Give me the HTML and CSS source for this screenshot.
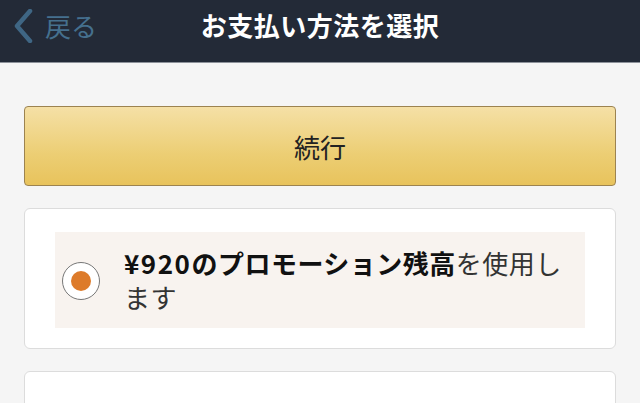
FILE: index.html
```html
<!DOCTYPE html>
<html lang="ja">
<head>
    <meta charset="UTF-8">
    <meta name="viewport" content="width=device-width, initial-scale=1.0">
    <title>お支払い方法を選択</title>
    <link rel="stylesheet" href="styles.css">
</head>
<body>

<div class="header">
    <a class="back" href="#">
        <svg class="chevron" width="20" height="34" viewBox="0 0 20 34">
            <path d="M17 2 L4 17 L17 32" fill="none" stroke="#3f6684" stroke-width="4.5" stroke-linecap="round" stroke-linejoin="round"/>
        </svg>
        <span>戻る</span>
    </a>
    <h1>お支払い方法を選択</h1>
</div>

<div class="content">
    <button class="continue">続行</button>

    <div class="card">
        <label class="option">
            <span class="radio"><span class="dot"></span></span>
            <span class="option-text"><b><span class="price">¥920</span>のプロモーション残高</b>を使用します</span>
        </label>
    </div>

    <div class="card next"></div>
</div>

</body>
</html>
```

FILE: styles.css
```css
body {
    margin: 0;
    font-family: "Noto Sans CJK JP", "Noto Sans", sans-serif;
    background-color: #f5f5f5;
    color: #222;
}
.header {
    height: 63px;
    background-color: #232a37; /* dark navy bar */
    border-bottom: 1px solid #8d929a;
    display: flex;
    align-items: flex-start;
    justify-content: center;
    padding-top: 6px;
    box-sizing: border-box;
    position: relative;
}
.back {
    position: absolute;
    left: 13px;
    top: 9px;
    display: flex;
    align-items: center;
    gap: 12px;
    color: #45708e;
    text-decoration: none;
    font-size: 26px;
    line-height: 34px;
}
.header h1 {
    margin: 0;
    color: white;
    font-size: 26px;
    line-height: 38px;
    font-weight: bold;
    letter-spacing: 0.5px;
}
.content {
    padding: 43px 24px 0 24px;
    display: flex;
    flex-direction: column;
    gap: 22px;
}
.continue {
    height: 80px;
    border: 1px solid #9c8350;
    border-radius: 4px;
    background: linear-gradient(to bottom, #f5e0a6, #ecce74 60%, #e8c35c);
    color: #222;
    font-family: inherit;
    font-size: 26px;
}
.card {
    background: white;
    border: 1px solid #dcdcdc;
    border-radius: 6px;
    padding: 23px 30px 20px 30px;
}
.option {
    display: flex;
    align-items: center;
    gap: 24px;
    background-color: #f8f3ef;
    padding: 14px 6px 14px 7px;
    min-height: 67px;
}
.radio {
    flex: none;
    width: 36px;
    height: 36px;
    border: 1.5px solid #777;
    border-radius: 50%;
    background: white;
    display: flex;
    align-items: center;
    justify-content: center;
    margin-top: 2px;
}
.dot {
    width: 20px;
    height: 20px;
    border-radius: 50%;
    background-color: #dd7b2a; /* orange selection */
}
.option-text {
    font-size: 26px;
    line-height: 34px;
    letter-spacing: 0.5px;
    color: #333;
}
.option-text b {
    color: #111;
}
.price {
    letter-spacing: 1.5px;
}
.next {
    height: 40px;
    padding: 0;
}
```
